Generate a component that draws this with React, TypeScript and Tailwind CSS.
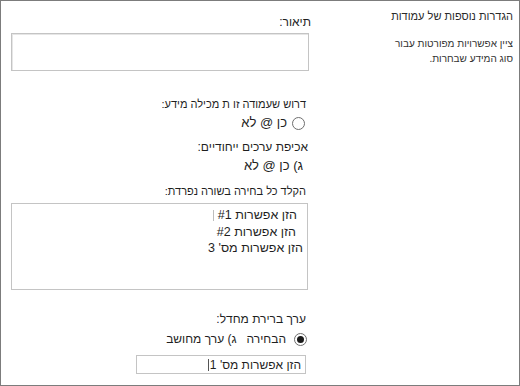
import React from "react";

function Radio({ checked }: { checked?: boolean }) {
  return (
    <span className="inline-flex w-[13px] h-[13px] rounded-full border border-[#6e6e6e] bg-white items-center justify-center shrink-0">
      {checked ? <span className="w-[7px] h-[7px] rounded-full bg-[#1a1a1a]" /> : null}
    </span>
  );
}

export default function App() {
  return (
    <div
      dir="rtl"
      className="w-[520px] h-[386px] border border-[#7c7c7c] flex bg-white text-[#1f1f1f] font-['Liberation_Sans','DejaVu_Sans',sans-serif] overflow-hidden"
    >
      <div className="w-[208px] pr-[6px] pt-[7px] shrink-0">
        <div className="text-[11px] leading-[16px] text-[#2b2b2b]">הגדרות נוספות של עמודות</div>
        <div className="mt-[12px] text-[10px] leading-[15px] text-[#333]">
          <div>ציין אפשרויות מפורטות עבור</div>
          <div>סוג המידע שבחרות.</div>
        </div>
      </div>
      <div className="w-[300px] pt-[13px] shrink-0 text-[12px] leading-[16px]">
        <div>תיאור:</div>
        <div className="mt-[3px] mr-[2px] w-[298px] h-[38px] border border-[#c4c4c4] shadow-[inset_1px_1px_0_#e6e6e6]" />
        <div className="mt-[25px] text-[11px] mr-[5px]">דרוש שעמודה זו ת מכילה מידע:</div>
        <div className="mt-[3px] mr-[6px] flex items-center gap-[5px] text-[13px]">
          <Radio />
          <span>כן @ לא</span>
        </div>
        <div className="mt-[8px] mr-[3px]">אכיפת ערכים ייחודיים:</div>
        <div className="mt-[3px] mr-[8px] text-[13px]">ג) כן @ לא</div>
        <div className="mt-[9px] mr-[5px] text-[11px]">הקלד כל בחירה בשורה נפרדת:</div>
        <div className="mt-[4px] mr-[3px] w-[297px] h-[87px] border border-[#c4c4c4] pt-[3px] pr-[4px] leading-[16.5px] text-[12.5px]">
          <div className="mr-[6px] flex items-center gap-[4px]">
            <span>הזן אפשרות #1</span>
            <span className="w-px h-[11px] bg-[#bdbdbd]" />
          </div>
          <div className="mr-[7px]">הזן אפשרות #2</div>
          <div>הזן אפשרות מס' 3</div>
        </div>
        <div className="mt-[21px] mr-[5px]">ערך ברירת מחדל:</div>
        <div className="mt-[4px] mr-[4px] flex items-center gap-[8px]">
          <Radio checked />
          <span>הבחירה&nbsp;&nbsp; ג) ערך מחושב</span>
        </div>
        <div className="mt-[8px] mr-[5px] w-[170px] h-[19px] border border-[#c4c4c4] flex items-center pr-[4px] gap-[1px]">
          <span className="leading-[16px] text-[12px]">הזן אפשרות מס' 1</span>
          <span className="w-px h-[12px] bg-[#555]" />
        </div>
      </div>
    </div>
  );
}
